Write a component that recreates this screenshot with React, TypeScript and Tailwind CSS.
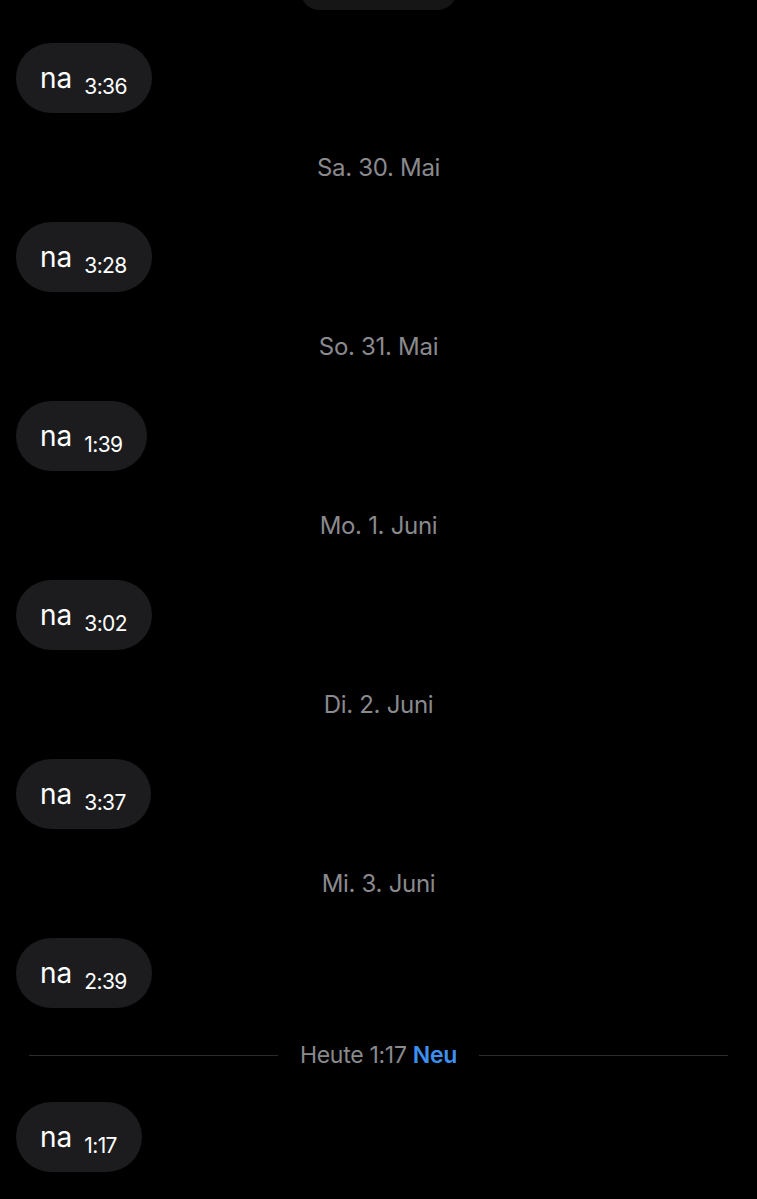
const messages = [
  { time: "3:36", date: "Sa. 30. Mai" },
  { time: "3:28", date: "So. 31. Mai" },
  { time: "1:39", date: "Mo. 1. Juni" },
  { time: "3:02", date: "Di. 2. Juni" },
  { time: "3:37", date: "Mi. 3. Juni" },
  { time: "2:39", date: null },
];

function Bubble({ time }: { time: string }) {
  return (
    <div className="flex">
      <div className="flex h-[70px] items-center rounded-full bg-[#1c1c1e] pl-[24px] pr-[25px]">
        <span className="text-[28px] leading-none text-white">na</span>
        <span className="ml-[12px] mt-[17px] text-[21px] leading-none tracking-[-0.6px] text-white">
          {time}
        </span>
      </div>
    </div>
  );
}

export default function App() {
  return (
    <div
      className="h-[1199px] overflow-hidden bg-black px-[16px]"
      style={{ fontFamily: "Inter, 'Noto Sans', sans-serif" }}
    >
      <div className="mx-auto -mt-[30px] h-[40px] w-[157px] rounded-full bg-[#161617]" />
      <div className="h-[33px]" />
      {messages.map((m) => (
        <div key={m.time}>
          <Bubble time={m.time} />
          {m.date && (
            <div className="flex h-[109px] items-center justify-center">
              <span className="text-[24px] text-[#8a8a8e] tracking-[-0.3px]">{m.date}</span>
            </div>
          )}
        </div>
      ))}
      <div className="flex h-[94px] items-center gap-[22px] px-[13px]">
        <div className="h-px flex-1 bg-[#2c2c2e]" />
        <span className="text-[23px] tracking-[-0.3px] text-[#8a8a8e]">
          Heute 1:17 <span className="font-semibold text-[#3d8ff0]">Neu</span>
        </span>
        <div className="h-px flex-1 bg-[#2c2c2e]" />
      </div>
      <Bubble time="1:17" />
    </div>
  );
}
